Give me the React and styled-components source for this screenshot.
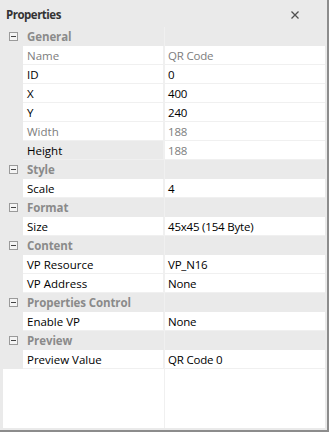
import React from 'react'
import styled, { createGlobalStyle } from 'styled-components'

const GlobalStyle = createGlobalStyle`
  html, body {
    margin: 0;
    padding: 0;
    background: #ffffff;
  }
  body {
    font-family: 'Open Sans', 'Noto Sans', sans-serif;
    font-size: 11.5px;
  }
`

const Panel = styled.div`
  width: 327px;
  height: 430px;
  display: flex;
  flex-direction: column;
  background: #eaeaea;
  border-right: 2px solid #8c8c8c;
  border-bottom: 2px solid #8c8c8c;
`

const TitleBar = styled.div`
  height: 27px;
  display: flex;
  align-items: center;
  justify-content: space-between;
  padding: 2px 28px 0 6px;
  box-sizing: border-box;
`

const Title = styled.span`
  font-weight: 700;
  color: #333333;
  font-size: 11.5px;
  letter-spacing: -0.5px;
`

const CloseIcon = styled.svg`
  width: 8px;
  height: 8px;
  display: block;
`

const Grid = styled.div`
  flex: 1;
  margin: 0 2px 2px 3px;
  background: #ffffff;
  display: grid;
  grid-template-columns: 20px 141px 1fr;
  grid-auto-rows: 19px;
  align-content: start;
  position: relative;
`

const Divider = styled.div`
  position: absolute;
  top: 0;
  bottom: 0;
  left: 161px;
  width: 1px;
  background: #f0f0f0;
`

const Margin = styled.div`
  background: #eaeaea;
  display: flex;
  align-items: center;
  justify-content: center;
`

const Category = styled.div`
  grid-column: 2 / 4;
  background: #eaeaea;
  display: flex;
  align-items: center;
  padding-left: 4px;
  font-weight: 700;
  color: #8a8a8a;
  letter-spacing: -0.1px;
`

const NameCell = styled.div`
  display: flex;
  align-items: center;
  padding-left: 4px;
  border-bottom: 1px solid #f0f0f0;
  border-right: 1px solid #f0f0f0;
  background: ${p => (p.$selected ? '#eaeaea' : '#ffffff')};
  color: ${p => (p.$muted ? '#7d7d7d' : '#000000')};
  white-space: nowrap;
`

const ValueCell = styled.div`
  display: flex;
  align-items: center;
  padding-left: 4px;
  border-bottom: 1px solid #f0f0f0;
  color: ${p => (p.$muted ? '#7d7d7d' : '#000000')};
  white-space: nowrap;
  letter-spacing: -0.2px;
`

const MinusBox = () => (
  <svg width='9' height='9' viewBox='0 0 9 9'>
    <rect x='0.5' y='0.5' width='8' height='8' fill='#f4f4f4' stroke='#9a9a9a' />
    <line x1='2' y1='4.5' x2='7' y2='4.5' stroke='#444' />
  </svg>
)

const sections = [
  {
    title: 'General',
    rows: [
      { name: 'Name', value: 'QR Code', nameMuted: true, valueMuted: true },
      { name: 'ID', value: '0' },
      { name: 'X', value: '400' },
      { name: 'Y', value: '240' },
      { name: 'Width', value: '188', nameMuted: true, valueMuted: true },
      { name: 'Height', value: '188', valueMuted: true, selected: true }
    ]
  },
  { title: 'Style', rows: [{ name: 'Scale', value: '4' }] },
  { title: 'Format', rows: [{ name: 'Size', value: '45x45 (154 Byte)' }] },
  {
    title: 'Content',
    rows: [
      { name: 'VP Resource', value: 'VP_N16' },
      { name: 'VP Address', value: 'None' }
    ]
  },
  { title: 'Properties Control', rows: [{ name: 'Enable VP', value: 'None' }] },
  { title: 'Preview', rows: [{ name: 'Preview Value', value: 'QR Code 0' }] }
]

const App = () => {
  return (
    <>
      <GlobalStyle />
      <Panel>
        <TitleBar>
          <Title>Properties</Title>
          <CloseIcon viewBox='0 0 8 8'>
            <path d='M0.5 0.5 L7.5 7.5 M7.5 0.5 L0.5 7.5' stroke='#505050' strokeWidth='1.3' />
          </CloseIcon>
        </TitleBar>
        <Grid>
          {sections.map(section => (
            <React.Fragment key={section.title}>
              <Margin>
                <MinusBox />
              </Margin>
              <Category>{section.title}</Category>
              {section.rows.map(row => (
                <React.Fragment key={row.name}>
                  <Margin />
                  <NameCell $muted={row.nameMuted} $selected={row.selected}>
                    {row.name}
                  </NameCell>
                  <ValueCell $muted={row.valueMuted}>{row.value}</ValueCell>
                </React.Fragment>
              ))}
            </React.Fragment>
          ))}
          <Divider />
        </Grid>
      </Panel>
    </>
  )
}

export default App
